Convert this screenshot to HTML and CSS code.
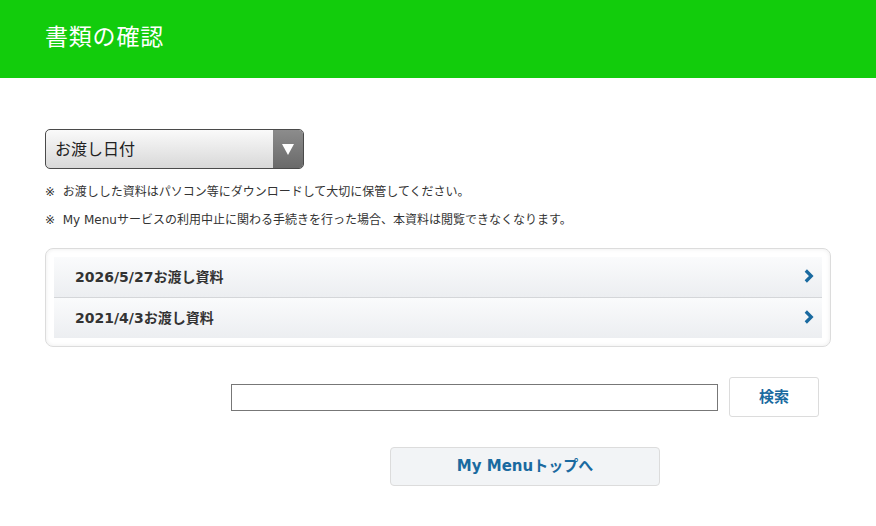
FILE: index.html
```html
<!DOCTYPE html>
<html lang="ja">
<head>
    <meta charset="UTF-8">
    <title>書類の確認</title>
    <link rel="stylesheet" href="styles.css">
</head>
<body>
<div class="header">
    <h1>書類の確認</h1>
</div>
<div class="content">
    <div class="select-box">
        <span class="select-label">お渡し日付</span>
        <span class="select-arrow"></span>
    </div>
    <p class="note">※&nbsp; お渡しした資料はパソコン等にダウンロードして大切に保管してください。</p>
    <p class="note">※&nbsp; My Menuサービスの利用中止に関わる手続きを行った場合、本資料は閲覧できなくなります。</p>
    <div class="doc-list">
        <a class="doc-item" href="#">
            <span>2026/5/27お渡し資料</span>
            <svg class="chevron" width="10" height="14" viewBox="0 0 10 14"><path d="M1.8 1.5 L7.3 7 L1.8 12.5" fill="none" stroke="#1a6aa0" stroke-width="3.2"/></svg>
        </a>
        <a class="doc-item" href="#">
            <span>2021/4/3お渡し資料</span>
            <svg class="chevron" width="10" height="14" viewBox="0 0 10 14"><path d="M1.8 1.5 L7.3 7 L1.8 12.5" fill="none" stroke="#1a6aa0" stroke-width="3.2"/></svg>
        </a>
    </div>
    <div class="search-row">
        <input type="text" class="search-input">
        <button class="search-btn">検索</button>
    </div>
    <div class="top-row">
        <a class="top-btn" href="#">My Menuトップへ</a>
    </div>
</div>
</body>
</html>
```

FILE: styles.css
```css
body {
    margin: 0;
    font-family: "DejaVu Sans", "Noto Sans CJK JP", sans-serif;
    color: #333;
    background: #fff;
}
.header {
    background-color: #12cc0c;
    height: 78px;
    display: flex;
    align-items: center;
    padding-left: 45px;
}
.header h1 {
    margin: 0 0 8px 0;
    color: #fff;
    font-family: "Noto Sans CJK JP", sans-serif;
    font-size: 23px;
    font-weight: normal;
    letter-spacing: 0.8px;
}
.content {
    padding: 51px 45px 0 45px;
}
.select-box {
    width: 257px;
    height: 38px;
    border: 1px solid #4a4a4a;
    border-radius: 5px;
    display: flex;
    overflow: hidden;
    background: linear-gradient(#fafafa, #d8d8d8);
}
.select-label {
    flex: 1;
    font-family: "Noto Sans CJK JP", sans-serif;
    font-size: 16px;
    line-height: 36px;
    padding-left: 9px;
    color: #222;
}
.select-arrow {
    width: 30px;
    background: linear-gradient(#8c8c8c, #6a6a6a);
    display: flex;
    align-items: center;
    justify-content: center;
}
.select-arrow::after {
    content: "";
    border-left: 6px solid transparent;
    border-right: 6px solid transparent;
    border-top: 11px solid #fff;
    margin-top: 1px;
}
.note {
    margin: 0;
    font-size: 12px;
    line-height: 28px;
    color: #333;
}
.select-box + .note {
    margin-top: 9px;
}
.doc-list {
    margin-top: 14px;
    width: 768px;
    border: 1px solid #dcdcdc;
    border-radius: 8px;
    padding: 8px;
    box-shadow: inset 0 0 4px rgba(0, 0, 0, 0.08);
}
.doc-item {
    display: flex;
    align-items: center;
    justify-content: space-between;
    box-sizing: border-box;
    height: 40px;
    padding: 0 8px 3px 21px;
    background: linear-gradient(#fafbfc, #eceef1);
    text-decoration: none;
    color: #333;
    font-size: 14px;
    font-weight: bold;
}
.doc-item + .doc-item {
    height: 41px;
    border-top: 1px solid #d4d6d9;
}
.search-row {
    margin-top: 30px;
    display: flex;
    align-items: center;
    padding-left: 186px;
}
.search-input {
    width: 483px;
    height: 23px;
    border: 1px solid #777;
    margin: 0;
    padding: 1px;
}
.search-btn {
    margin-left: 11px;
    width: 90px;
    height: 40px;
    padding: 0 0 3px 0;
    background: #fff;
    border: 1px solid #dcdcdc;
    border-radius: 3px;
    color: #1a6aa0;
    font-family: inherit;
    font-size: 15px;
    font-weight: bold;
}
.top-row {
    margin-top: 30px;
    padding-left: 345px;
}
.top-btn {
    display: block;
    width: 268px;
    height: 37px;
    line-height: 37px;
    text-align: center;
    background: #f2f4f6;
    border: 1px solid #dcdcdc;
    border-radius: 4px;
    color: #1a6aa0;
    text-decoration: none;
    font-size: 15px;
    font-weight: bold;
}
```
